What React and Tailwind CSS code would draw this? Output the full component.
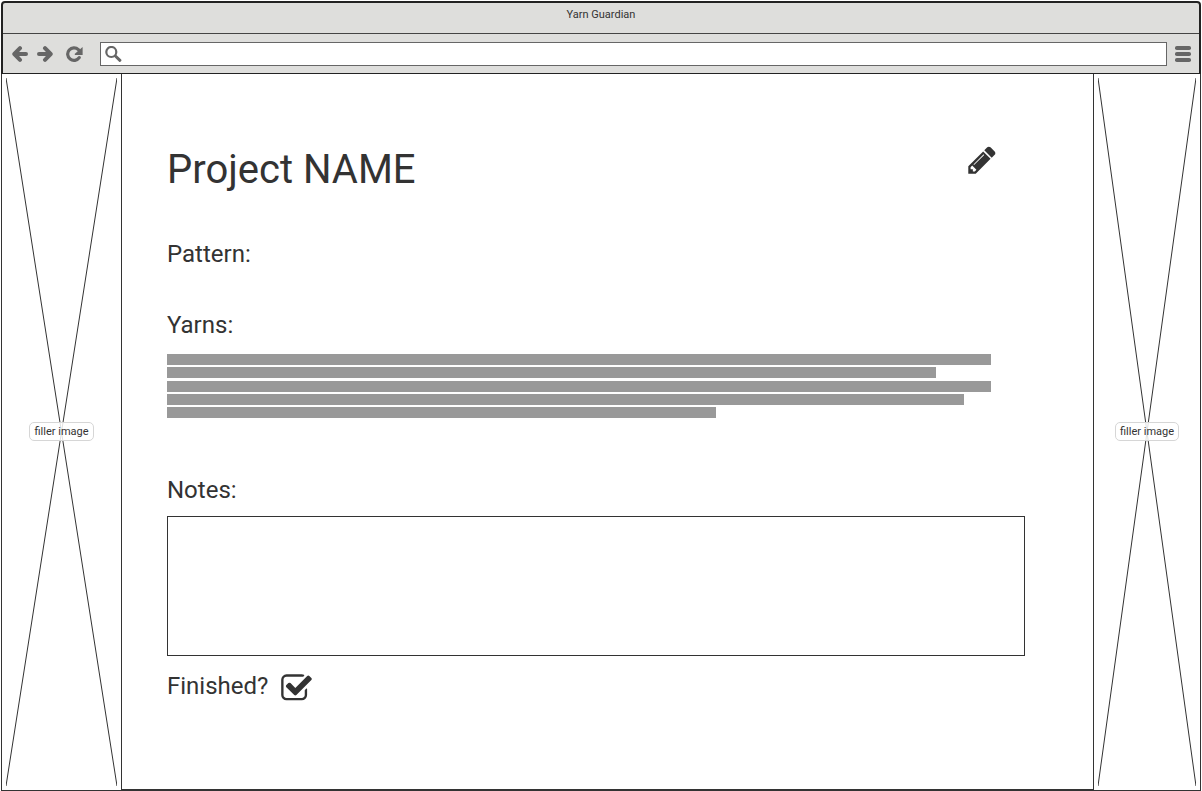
const yarnLines = ['w-full', 'w-14/15', 'w-full', 'w-29/30', 'w-2/3'];

const iconStroke = {
  fill: 'none',
  stroke: 'currentColor',
  strokeLinecap: 'round',
  strokeLinejoin: 'round',
};

function BackIcon() {
  return (
    <svg viewBox="0 0 16 16" className="size-4" aria-hidden="true">
      <path d="M8 2.2L2.3 8L8 13.8M2.6 8H14" strokeWidth="4" {...iconStroke} />
    </svg>
  );
}

function ForwardIcon() {
  return (
    <svg viewBox="0 0 16 16" className="size-4" aria-hidden="true">
      <path d="M8 2.2L13.7 8L8 13.8M13.4 8H2" strokeWidth="4" {...iconStroke} />
    </svg>
  );
}

function ReloadIcon() {
  return (
    <svg viewBox="0 0 17 16" className="h-4 w-[17px]" aria-hidden="true">
      <path d="M13.2 11.6A6.3 6.3 0 1 1 12.4 3.6" strokeWidth="3.2" {...iconStroke} />
      <path d="M16.6 1V9H9L8.6 8Z" fill="currentColor" />
    </svg>
  );
}

function SearchIcon() {
  return (
    <svg viewBox="0 0 17 16" className="h-4 w-[17px]" aria-hidden="true">
      <circle cx="6.3" cy="6" r="5" strokeWidth="2.2" {...iconStroke} />
      <path d="M10.4 10L14.9 14.3" strokeWidth="3" {...iconStroke} />
    </svg>
  );
}

function MenuIcon() {
  return (
    <svg viewBox="0 0 16 16" className="size-4" fill="currentColor" aria-hidden="true">
      <rect x="0" y="0" width="16" height="4" rx="1.8" />
      <rect x="0" y="6" width="16" height="4" rx="1.8" />
      <rect x="0" y="12" width="16" height="4" rx="1.8" />
    </svg>
  );
}

function PencilIcon() {
  return (
    <svg viewBox="0 0 1792 1792" className="size-8" fill="currentColor" aria-hidden="true">
      <path d="M491 1536l91-91-235-235-91 91v107h128v128h107zm523-928q0-22-22-22-10 0-17 7l-542 542q-7 7-7 17 0 22 22 22 10 0 17-7l542-542q7-7 7-17zm-54-192l416 416-832 832h-416v-416zm683 96q0 53-37 90l-166 166-416-416 166-165q36-38 90-38 53 0 91 38l235 234q37 39 37 91z" />
    </svg>
  );
}

function CheckSquare() {
  return (
    <svg viewBox="0 0 1792 1792" className="pointer-events-none col-start-1 row-start-1 size-[33px]" fill="currentColor" aria-hidden="true">
      <path d="M1472 930v318q0 119-84.5 203.5t-203.5 84.5h-832q-119 0-203.5-84.5t-84.5-203.5v-832q0-119 84.5-203.5t203.5-84.5h832q63 0 117 25 15 7 18 23 3 17-9 29l-49 49q-10 10-23 10-3 0-9-2-23-6-45-6h-832q-66 0-113 47t-47 113v832q0 66 47 113t113 47h832q66 0 113-47t47-113v-254q0-13 9-22l64-64q10-10 23-10 6 0 12 3 20 8 20 29z" />
      <path className="opacity-0 group-has-checked:opacity-100" d="M1703 441l-814 814q-24 24-57 24t-57-24l-430-430q-24-24-24-57t24-57l110-110q24-24 57-24t57 24l263 263 647-647q24-24 57-24t57 24l110 110q24 24 24 57t-24 57z" />
    </svg>
  );
}

function FillerImage({ className }) {
  return (
    <aside className={`grid shrink-0 border-x border-b border-[#333] p-1 ${className}`}>
      <div className="relative grid place-items-center">
        <svg className="absolute inset-0 size-full" stroke="#333" strokeWidth="1" aria-hidden="true">
          <line x1="0" y1="0" x2="100%" y2="100%" />
          <line x1="100%" y1="0" x2="0" y2="100%" />
        </svg>
        <span className="relative mb-px rounded-[5px] border border-[#d6d6d6] bg-white/85 px-1 text-[11px] leading-[17px] whitespace-nowrap">
          filler image
        </span>
      </div>
    </aside>
  );
}

function BrowserBar() {
  return (
    <header className="rounded-t-[4px] border-x-2 border-t-2 border-b border-[#222] bg-[#dededc]">
      <div className="h-[31px] border-b border-[#444] pt-1 text-center text-[11px] leading-4">
        Yarn Guardian
      </div>
      <div className="flex items-center pt-2 pr-2 pb-[7px] pl-[9px] text-[#666]">
        <button type="button" aria-label="Back">
          <BackIcon />
        </button>
        <button type="button" aria-label="Forward" className="ml-[9px]">
          <ForwardIcon />
        </button>
        <button type="button" aria-label="Reload" className="ml-[13px]">
          <ReloadIcon />
        </button>
        <label className="mx-2 ml-[17px] flex h-6 flex-1 items-center gap-2 border border-[#666] bg-white px-1">
          <SearchIcon />
          <input type="text" aria-label="Address" className="min-w-0 flex-1 text-[11px] text-[#333] outline-none" />
        </label>
        <button type="button" aria-label="Menu">
          <MenuIcon />
        </button>
      </div>
    </header>
  );
}

export default function App() {
  return (
    <div className="flex min-h-screen flex-col bg-white px-px pt-px font-['Roboto',sans-serif] text-[#333]">
      <BrowserBar />
      <div className="flex flex-1">
        <FillerImage className="w-[121px]" />
        <main className="min-w-0 flex-1 border-b-2 border-[#333] pt-[70px] pr-[68px] pb-[80px] pl-[45px] text-2xl">
          <div className="flex items-start justify-between pr-[27px]">
            <h1 className="text-[40px] leading-[52px]">Project NAME</h1>
            <button type="button" aria-label="Edit project">
              <PencilIcon />
            </button>
          </div>
          <h2 className="mt-[42px]">Pattern:</h2>
          <h2 className="mt-[39px]">Yarns:</h2>
          <div className="mt-[13px] mr-[34px] flex h-16 flex-col justify-between">
            {yarnLines.map((width, i) => (
              <div key={i} className={`h-[11px] bg-[#999] ${width}`} />
            ))}
          </div>
          <label htmlFor="notes" className="mt-[56px] block">
            Notes:
          </label>
          <textarea id="notes" className="mt-[10px] block h-[140px] w-full resize-none border border-[#333] p-2 text-base outline-none" />
          <div className="mt-[14px] flex items-start gap-3">
            <label htmlFor="finished">Finished?</label>
            <span className="group mt-0.5 grid">
              <input id="finished" type="checkbox" defaultChecked className="col-start-1 row-start-1 size-[33px] appearance-none" />
              <CheckSquare />
            </span>
          </div>
        </main>
        <FillerImage className="w-[108px]" />
      </div>
    </div>
  );
}
